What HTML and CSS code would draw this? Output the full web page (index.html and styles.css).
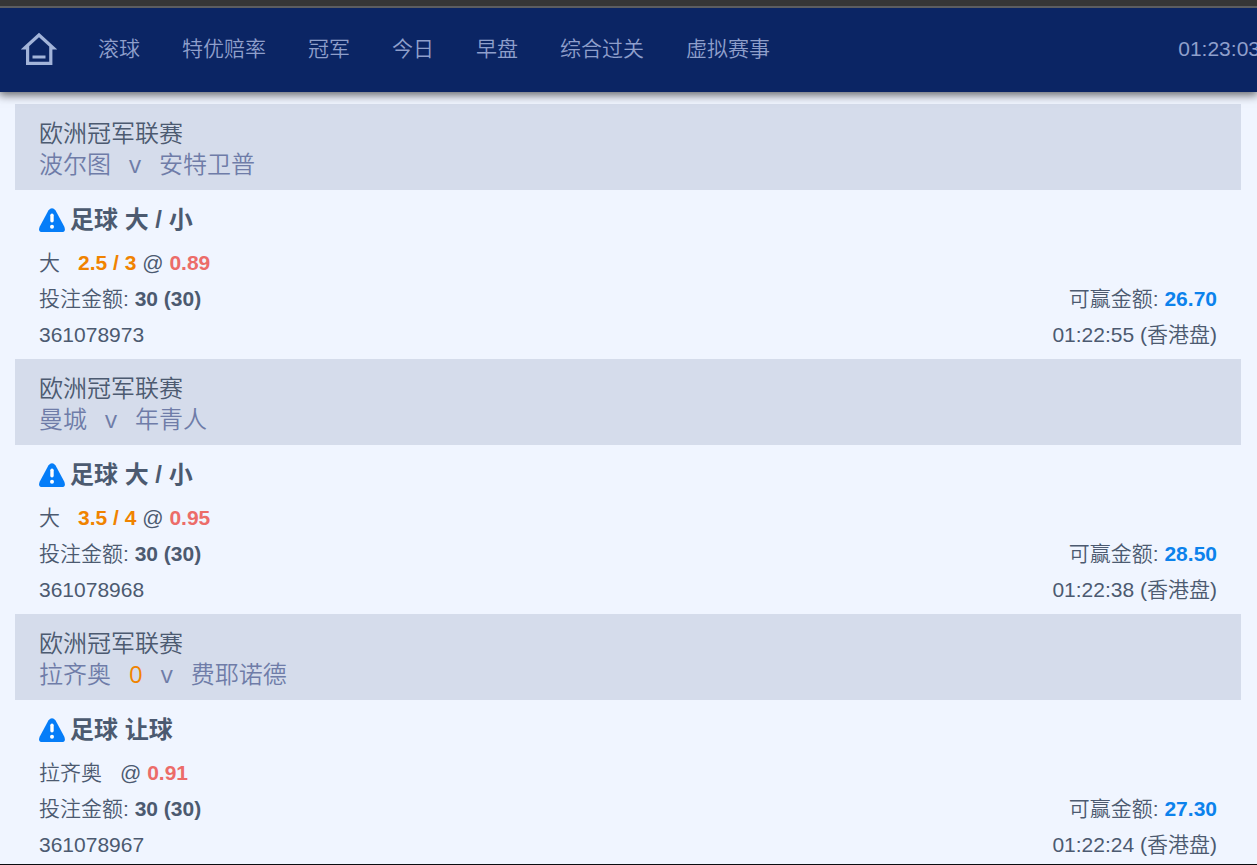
FILE: index.html
```html
<!DOCTYPE html>
<html lang="zh-CN">
<head>
    <meta charset="UTF-8">
    <meta name="viewport" content="width=device-width, initial-scale=1.0">
    <title>注单</title>
    <link rel="stylesheet" href="styles.css">
</head>
<body>
    <svg class="defs" width="0" height="0" aria-hidden="true">
        <symbol id="warn" viewBox="0 0 26 25">
            <path d="M9.4 2.4 Q13 -1.8 16.6 2.4 L25.2 18.5 Q27.4 24 22.6 24 H3.4 Q-1.4 24 0.8 18.5 Z" fill="#057df8"/>
            <path d="M13 7.2 V12.8" stroke="#fff" stroke-width="3.4" stroke-linecap="round"/>
            <circle cx="13" cy="18.8" r="2" fill="#fff"/>
        </symbol>
    </svg>
    <header class="topbar">
        <nav class="nav">
            <a href="#" class="home" aria-label="首页">
                <svg width="36" height="34" viewBox="0 0 36 34" fill="none" stroke="currentColor">
                    <path d="M4 15.8 L18 3 L32 15.8 H29.8 V31.4 H6.6 V15.8 Z" stroke-width="3.2"/>
                    <path d="M11.5 25 H24.5" stroke-width="3"/>
                </svg>
            </a>
            <a href="#">滚球</a>
            <a href="#">特优赔率</a>
            <a href="#">冠军</a>
            <a href="#">今日</a>
            <a href="#">早盘</a>
            <a href="#">综合过关</a>
            <a href="#">虚拟赛事</a>
        </nav>
        <time class="clock">01:23:03</time>
    </header>
    <main class="tickets">
        <article class="ticket">
            <header class="match">
                <div class="league">欧洲冠军联赛</div>
                <div class="teams"><span>波尔图</span><span class="vs">v</span><span>安特卫普</span></div>
            </header>
            <div class="bet">
                <h2><svg class="warn"><use href="#warn"/></svg>足球 大 / 小</h2>
                <div class="row"><p><span class="pick">大</span><b class="line">2.5 / 3</b> @ <b class="odds">0.89</b></p></div>
                <div class="row"><p>投注金额: <b>30 (30)</b></p><p>可赢金额: <b class="win">26.70</b></p></div>
                <div class="row"><p>361078973</p><p>01:22:55 (香港盘)</p></div>
            </div>
        </article>
        <article class="ticket">
            <header class="match">
                <div class="league">欧洲冠军联赛</div>
                <div class="teams"><span>曼城</span><span class="vs">v</span><span>年青人</span></div>
            </header>
            <div class="bet">
                <h2><svg class="warn"><use href="#warn"/></svg>足球 大 / 小</h2>
                <div class="row"><p><span class="pick">大</span><b class="line">3.5 / 4</b> @ <b class="odds">0.95</b></p></div>
                <div class="row"><p>投注金额: <b>30 (30)</b></p><p>可赢金额: <b class="win">28.50</b></p></div>
                <div class="row"><p>361078968</p><p>01:22:38 (香港盘)</p></div>
            </div>
        </article>
        <article class="ticket">
            <header class="match">
                <div class="league">欧洲冠军联赛</div>
                <div class="teams"><span>拉齐奥</span><span class="handicap">0</span><span class="vs">v</span><span>费耶诺德</span></div>
            </header>
            <div class="bet">
                <h2><svg class="warn"><use href="#warn"/></svg>足球 让球</h2>
                <div class="row"><p><span class="pick">拉齐奥</span>@ <b class="odds">0.91</b></p></div>
                <div class="row"><p>投注金额: <b>30 (30)</b></p><p>可赢金额: <b class="win">27.30</b></p></div>
                <div class="row"><p>361078967</p><p>01:22:24 (香港盘)</p></div>
            </div>
        </article>
    </main>
    <footer class="edge"></footer>
</body>
</html>
```
FILE: styles.css
```css
* { box-sizing: border-box; }
body {
    margin: 0;
    height: 100vh;
    display: flex;
    flex-direction: column;
    overflow: hidden;
    background: #f0f5ff;
    color: #4c5a70;
    font-family: "Liberation Sans", "Noto Sans CJK SC", sans-serif;
    font-size: 21px;
    font-weight: 350;
}
h2, p { margin: 0; }
b { font-weight: 700; }
.defs { position: absolute; }
.topbar {
    display: flex;
    flex: none;
    justify-content: space-between;
    align-items: center;
    height: 92px;
    border-top: 6px solid #363636;
    background: #0b2564;
    box-shadow: inset 0 2px #5c5d60, 0 2px 9px 1px rgba(0, 0, 0, 0.6);
    color: #8f9fcb;
    z-index: 1;
}
.nav {
    display: flex;
    align-items: center;
    gap: 42px;
    padding-left: 21px;
    line-height: 30px;
}
.nav a { color: inherit; text-decoration: none; white-space: nowrap; }
.nav .home { display: flex; margin-right: -1px; color: #a3b4d9; }
/* the clock runs slightly past the right edge */
.clock { margin-right: -3px; line-height: 30px; }
.tickets {
    flex: 1;
    min-height: 0;
    overflow: hidden;
    padding: 12px 16px 0 15px;
}
.match {
    padding: 13px 24px 11px;
    background: #d5dceb;
    font-family: "Open Sans", "Noto Sans CJK SC", sans-serif;
    font-size: 24px;
    line-height: 31px;
}
.teams { display: flex; gap: 18px; color: #6f7ca8; }
.vs, .handicap { font-weight: 400; }
.handicap { color: #f08300; }
.bet { padding: 12px 24px 6px; }
.bet h2 {
    display: flex;
    align-items: center;
    gap: 5px;
    margin-bottom: 7px;
    font-size: 24px;
    line-height: 36px;
}
.warn { width: 26px; height: 25px; }
.row {
    display: flex;
    justify-content: space-between;
    line-height: 36px;
}
.pick { margin-right: 18px; }
.line { color: #f08300; }
.odds { color: #ec6c69; }
.win { color: #0c82ec; }
.edge { flex: none; height: 1px; background: #0c0c10; }
```
